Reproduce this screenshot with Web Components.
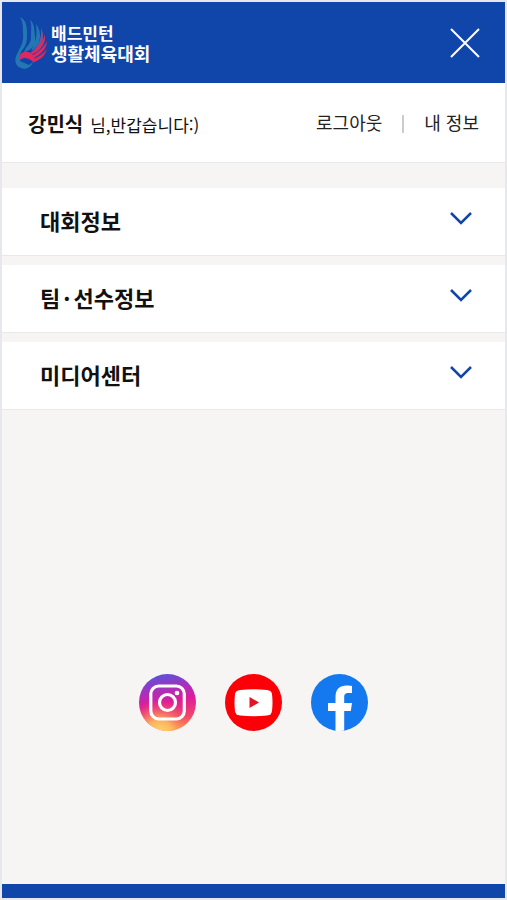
<!DOCTYPE html>
<html lang="ko">
<head>
<meta charset="utf-8">
<meta name="viewport" content="width=device-width, initial-scale=1">
<title>배드민턴 생활체육대회</title>
<style>
  :root { --brand: #1045aa; --paper: #f6f5f4; --line: #e9e9ea; }
  body { margin: 0; background: #e6e8ee; color: #111; font-family: "Noto Sans CJK KR", "Noto Sans", sans-serif; }
  .dot { padding: 0 3px; }
</style>
</head>
<body>
<mobile-menu>
  <site-header slot="header"></site-header>
  <user-bar name="강민식"></user-bar>
  <menu-list>
    <menu-item>대회정보</menu-item>
    <menu-item>팀<span class="dot">·</span>선수정보</menu-item>
    <menu-item>미디어센터</menu-item>
  </menu-list>
  <social-links slot="social"></social-links>
</mobile-menu>

<script>
const define = (name, html, setup) => {
  const template = document.createElement('template');
  template.innerHTML = html;
  customElements.define(name, class extends HTMLElement {
    constructor() {
      super();
      this.attachShadow({ mode: 'open' }).append(template.content.cloneNode(true));
    }
    connectedCallback() { if (setup) setup(this, this.shadowRoot); }
  });
};

define('mobile-menu', `
  <style>
    :host { display: flex; flex-direction: column; box-sizing: border-box; min-height: 100vh; padding: 2px; }
    main { flex: 1; display: flex; flex-direction: column; background: var(--paper); }
    .space { flex: 1; display: flex; flex-direction: column; justify-content: flex-end; padding: 80px 0 153px; }
    footer { height: 14px; background: var(--brand); }
  </style>
  <slot name="header"></slot>
  <main><slot></slot><div class="space"><slot name="social"></slot></div></main>
  <footer></footer>`);

define('site-header', `
  <style>
    :host { display: flex; align-items: center; justify-content: space-between; box-sizing: border-box; height: 81px; padding: 0 24px 0 12px; background: var(--brand); color: #fff; }
    a { display: flex; align-items: center; color: inherit; text-decoration: none; font-weight: 700; line-height: 21px; }
    .name { display: flex; flex-direction: column; }
    .first { font-size: 17px; }
    .second { font-size: 18px; }
    svg { display: block; }
    button { padding: 0; border: 0; background: none; color: inherit; cursor: pointer; }
  </style>
  <a href="#" aria-label="배드민턴 생활체육대회">
    <svg width="37" height="56" viewBox="0 0 37 56">
      <g fill="#2478b2">
        <path d="M6 2C12 5 13 11 13 18C13 25 13 29 9 34C6 38 5 41 6 46L15 50L19 47C17 53 11 55 7 53C1 51 0 45 3 39C7 31 10 27 9 18C9 12 9 7 6 2Z"/>
        <path d="M16 5C21 9 20 15 21 22C22 29 20 33 13 36L10 37C12 31 17 29 17 22C17 15 18 10 16 5Z"/>
        <path d="M22 9C27 15 27 24 24 29C21 34 19 35 17 36C20 30 24 24 22 9Z"/>
      </g>
      <path d="M27 13C31 21 29 28 25 32C22 35 20 37 18 37C24 31 28 24 27 13Z" fill="#755594"/>
      <g fill="#df285f">
        <path d="M31 19C32 28 28 35 17 40L16 38C24 33 29 27 31 19Z"/>
        <path d="M33 26C33 33 27 40 19 43L17 41C25 37 30 32 33 26Z"/>
        <path d="M33 34C31 41 26 45 20 47L19 44C25 42 30 38 33 34Z"/>
        <path d="M5 46C4 39 10 35 14 37C19 38 22 43 20 48C17 44 9 40 5 46Z"/>
      </g>
    </svg>
    <span class="name"><span class="first">배드민턴</span><span class="second">생활체육대회</span></span>
  </a>
  <button type="button" aria-label="닫기">
    <svg width="32" height="32" viewBox="0 0 32 32" fill="none" stroke="#fff" stroke-width="2"><path d="M2 2L30 30M30 2L2 30"/></svg>
  </button>`);

define('user-bar', `
  <style>
    :host { display: flex; align-items: center; justify-content: space-between; box-sizing: border-box; height: 80px; padding: 0 26px; background: #fff; border-bottom: 1px solid var(--line); }
    p { display: flex; align-items: baseline; gap: 7px; margin: 0; font-size: 17px; line-height: 28px; padding-top: 3px; }
    strong { font-size: 20px; font-weight: 700; }
    nav { display: flex; align-items: center; font-size: 18px; line-height: 28px; padding-bottom: 2px; }
    a { color: #222; text-decoration: none; }
    i { width: 2px; height: 18px; margin: 4px 20px 0; background: #ccc; }
  </style>
  <p><strong></strong><span>님,반갑습니다:)</span></p>
  <nav><a href="#">로그아웃</a><i></i><a href="#">내 정보</a></nav>`,
  (host, root) => { root.querySelector('strong').textContent = host.getAttribute('name'); });

define('menu-list', `
  <style>:host { display: flex; flex-direction: column; gap: 9px; padding-top: 25px; }</style>
  <slot></slot>`);

define('menu-item', `
  <style>
    :host { display: block; background: #fff; border-bottom: 1px solid var(--line); }
    button { display: flex; align-items: center; justify-content: space-between; box-sizing: border-box; width: 100%; height: 67px; padding: 0 32px 4px 38px; border: 0; background: none; color: #111; font: 700 22px/32px "Noto Sans CJK KR", "Noto Sans", sans-serif; cursor: pointer; }
    svg { display: block; margin-bottom: 4px; }
  </style>
  <button type="button" aria-expanded="false"><span><slot></slot></span>
    <svg width="24" height="16" viewBox="0 0 24 16" fill="none" stroke="#1045aa" stroke-width="2.500"><path d="M2 3L12 13L22 3"/></svg>
  </button>`);

define('social-links', `
  <style>
    :host { display: flex; justify-content: center; gap: 29px; }
    a, svg { display: block; }
  </style>
  <a href="#" aria-label="Instagram">
    <svg width="57" height="57" viewBox="0 0 57 57">
      <defs>
        <linearGradient id="base" x1=".4" y1="0" x2=".6" y2="1">
          <stop offset="0" stop-color="#5b50dc"/><stop offset=".25" stop-color="#a432bd"/><stop offset=".5" stop-color="#df1c98"/><stop offset=".8" stop-color="#f0466c"/><stop offset="1" stop-color="#f98b4c"/>
        </linearGradient>
        <radialGradient id="glow" cx=".35" cy="1.050" r=".6">
          <stop offset="0" stop-color="#ffdc70"/><stop offset=".4" stop-color="#ffc45d" stop-opacity=".85"/><stop offset="1" stop-color="#fa6050" stop-opacity="0"/>
        </radialGradient>
      </defs>
      <circle cx="28.500" cy="28.500" r="28.500" fill="url(#base)"/><circle cx="28.500" cy="28.500" r="28.500" fill="url(#glow)"/>
      <g fill="none" stroke="#fff" stroke-width="3.200"><rect x="11.800" y="12" width="33.500" height="33" rx="8"/><circle cx="28.500" cy="28.500" r="8"/></g>
      <circle cx="38" cy="19" r="2.300" fill="#fff"/>
    </svg>
  </a>
  <a href="#" aria-label="YouTube">
    <svg width="57" height="57" viewBox="0 0 57 57">
      <circle cx="28.500" cy="28.500" r="28.500" fill="#fb0007"/>
      <path d="M15 16Q28.500 14.500 42 16Q46.500 16.500 47 20Q48 28.500 47 37Q46.500 41 42 41.500Q28.500 43 15 41.500Q10.500 41 10 37Q9 28.500 10 20Q10.500 16.500 15 16Z" fill="#fff"/>
      <path d="M24.500 23L34 28.500L24.500 34Z" fill="#e51220"/>
    </svg>
  </a>
  <a href="#" aria-label="Facebook">
    <svg width="57" height="57" viewBox="0 0 57 57">
      <circle cx="28.500" cy="28.500" r="28.500" fill="#1479ef"/>
      <path d="M24.500 56.700V37H17V29H24.500V23C24.500 15 29 11.500 35.500 11.500C38 11.500 40 11.800 41 12V19H37.500C34 19 33.200 20.700 33.200 23.500V29H41L39.800 37H33.200V56.600Q28.500 57.400 24.500 56.700Z" fill="#fff"/>
    </svg>
  </a>`);
</script>
</body>
</html>
